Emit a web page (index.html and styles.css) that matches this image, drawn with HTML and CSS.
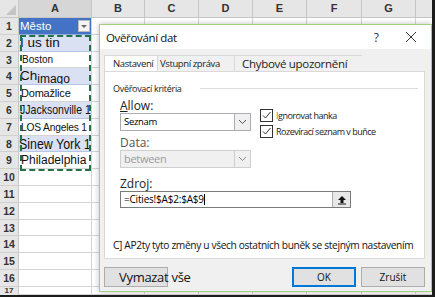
FILE: index.html
```html
<!DOCTYPE html>
<html lang="cs">

<head>
  <meta charset="UTF-8">
  <meta name="viewport" content="width=device-width, initial-scale=1.0">
  <title>Ověřování dat</title>
  <link rel="stylesheet" href="styles.css">
</head>

<body>
  <div class="frame">
    <div class="sheet">
      <div class="corner"><span class="tri"></span></div>
      <div class="colhead sel">A</div>
      <div class="colhead">B</div>
      <div class="colhead">C</div>
      <div class="colhead">D</div>
      <div class="colhead">E</div>
      <div class="colhead">F</div>
      <div class="colhead">G</div>
      <div class="colhead"></div>

      <div class="rowhead">1</div>
      <div class="cell head">Město<span class="filter"></span></div>
      <div class="cell"></div><div class="cell"></div><div class="cell"></div><div class="cell"></div><div class="cell"></div><div class="cell"></div><div class="cell"></div>

      <div class="rowhead">2</div>
      <div class="cell band big">I us tin</div>
      <div class="cell"></div><div class="cell"></div><div class="cell"></div><div class="cell"></div><div class="cell"></div><div class="cell"></div><div class="cell"></div>

      <div class="rowhead">3</div>
      <div class="cell small">Boston</div>
      <div class="cell"></div><div class="cell"></div><div class="cell"></div><div class="cell"></div><div class="cell"></div><div class="cell"></div><div class="cell"></div>

      <div class="rowhead">4</div>
      <div class="cell band big">Ch<span class="sub">imago</span></div>
      <div class="cell"></div><div class="cell"></div><div class="cell"></div><div class="cell"></div><div class="cell"></div><div class="cell"></div><div class="cell"></div>

      <div class="rowhead">5</div>
      <div class="cell mid">Domažlice</div>
      <div class="cell"></div><div class="cell"></div><div class="cell"></div><div class="cell"></div><div class="cell"></div><div class="cell"></div><div class="cell"></div>

      <div class="rowhead">6</div>
      <div class="cell band big"><span class="fit jax">JJacksonville 1</span></div>
      <div class="cell"></div><div class="cell"></div><div class="cell"></div><div class="cell"></div><div class="cell"></div><div class="cell"></div><div class="cell"></div>

      <div class="rowhead">7</div>
      <div class="cell mid"><span class="fit la">LOS Angeles 1</span></div>
      <div class="cell"></div><div class="cell"></div><div class="cell"></div><div class="cell"></div><div class="cell"></div><div class="cell"></div><div class="cell"></div>

      <div class="rowhead">8</div>
      <div class="cell band huge"><span class="fit ny">Sinew York 1</span></div>
      <div class="cell"></div><div class="cell"></div><div class="cell"></div><div class="cell"></div><div class="cell"></div><div class="cell"></div><div class="cell"></div>

      <div class="rowhead">9</div>
      <div class="cell phil">Philadelphia</div>
      <div class="cell"></div><div class="cell"></div><div class="cell"></div><div class="cell"></div><div class="cell"></div><div class="cell"></div><div class="cell"></div>

      <div class="rowhead">10</div>
      <div class="cell"></div><div class="cell"></div><div class="cell"></div><div class="cell"></div><div class="cell"></div><div class="cell"></div><div class="cell"></div><div class="cell"></div>
      <div class="rowhead">11</div>
      <div class="cell"></div><div class="cell"></div><div class="cell"></div><div class="cell"></div><div class="cell"></div><div class="cell"></div><div class="cell"></div><div class="cell"></div>
      <div class="rowhead">12</div>
      <div class="cell"></div><div class="cell"></div><div class="cell"></div><div class="cell"></div><div class="cell"></div><div class="cell"></div><div class="cell"></div><div class="cell"></div>
      <div class="rowhead">13</div>
      <div class="cell"></div><div class="cell"></div><div class="cell"></div><div class="cell"></div><div class="cell"></div><div class="cell"></div><div class="cell"></div><div class="cell"></div>
      <div class="rowhead">14</div>
      <div class="cell"></div><div class="cell"></div><div class="cell"></div><div class="cell"></div><div class="cell"></div><div class="cell"></div><div class="cell"></div><div class="cell"></div>
      <div class="rowhead">15</div>
      <div class="cell"></div><div class="cell"></div><div class="cell"></div><div class="cell"></div><div class="cell"></div><div class="cell"></div><div class="cell"></div><div class="cell"></div>
      <div class="rowhead">16</div>
      <div class="cell"></div><div class="cell"></div><div class="cell"></div><div class="cell"></div><div class="cell"></div><div class="cell"></div><div class="cell"></div><div class="cell"></div>
      <div class="rowhead last">17</div>
      <div class="cell"></div><div class="cell"></div><div class="cell"></div><div class="cell"></div><div class="cell"></div><div class="cell"></div><div class="cell"></div><div class="cell"></div>
    </div>

    <!-- copy marquee around A2:A9 -->
    <div class="marquee"></div>

    <div class="dialog">
      <div class="titlebar">
        <span class="title">Ověřování dat</span>
        <span class="help">?</span>
        <svg class="close" width="12" height="12" viewBox="0 0 12 12">
          <path d="M1 1 L11 11 M11 1 L1 11" stroke="#333" stroke-width="1" fill="none" />
        </svg>
      </div>
      <div class="body">
        <div class="tabs">
          <div class="tab active">Nastavení</div>
          <div class="tab">Vstupní zpráva</div>
          <div class="tab wide">Chybové upozornění</div>
        </div>
        <div class="panel">
          <div class="group">
            <span>Ověřovací kritéria</span>
            <span class="rule"></span>
          </div>
          <div class="criteria">
            <div class="leftcol">
              <div class="label"><u>A</u>llow:</div>
              <div class="select">
                <span class="value">Seznam</span>
                <span class="drop"><svg width="9" height="6" viewBox="0 0 9 6"><path d="M1 1 L4.5 4.5 L8 1" stroke="#555" fill="none" /></svg></span>
              </div>
              <div class="label data">Data:</div>
              <div class="select disabled">
                <span class="value">between</span>
                <span class="drop"><svg width="9" height="6" viewBox="0 0 9 6"><path d="M1 1 L4.5 4.5 L8 1" stroke="#888" fill="none" /></svg></span>
              </div>
            </div>
            <div class="checks">
              <div class="check">
                <span class="box"><svg width="11" height="11" viewBox="0 0 11 11"><path d="M2 5.5 L4.5 8 L9.5 2" stroke="#333" fill="none" /></svg></span>
                <span><span class="orange">I</span>gnorovat hanka</span>
              </div>
              <div class="check">
                <span class="box"><svg width="11" height="11" viewBox="0 0 11 11"><path d="M2 5.5 L4.5 8 L9.5 2" stroke="#333" fill="none" /></svg></span>
                <span>Rozevírací seznam v buňce</span>
              </div>
            </div>
          </div>
          <div class="label source">Zdroj:</div>
          <div class="input">
            <span class="value">=Cities!$A$2:$A$9<span class="caret"></span></span>
            <span class="pick"><svg width="10" height="10" viewBox="0 0 10 10"><path d="M5 1 L9 5 L6.5 5 L6.5 8 L3.5 8 L3.5 5 L1 5 Z" fill="#111" /><rect x="1" y="8.5" width="8" height="1" fill="#111" /></svg></span>
          </div>
          <div class="apply">C] AP2ty tyto změny u všech ostatních buněk se stejným nastavením</div>
        </div>
        <div class="buttons">
          <button class="btn clear">Vymazat vše</button>
          <span class="spacer"></span>
          <button class="btn ok">OK</button>
          <button class="btn">Zrušit</button>
        </div>
      </div>
    </div>
  </div>
</body>

</html>
```

FILE: styles.css
```css
body {
  margin: 0;
  padding: 0;
  background: #1c1c1c;
  font-family: "Open Sans", "Noto Sans", sans-serif;
}

.frame {
  position: relative;
  width: 432px;
  height: 295px;
  overflow: hidden;
  background: #fff;
}

.sheet {
  display: grid;
  grid-template-columns: 19px 73px 53px 54px 54px 54px 55px 54px 20px;
  grid-template-rows: 18px repeat(16, 16.8px) 8.2px;
  font-family: "Liberation Sans", Arial, sans-serif;
}

.corner {
  background: #e6e6e6;
  border-right: 1px solid #c6c6c6;
  border-bottom: 1px solid #c6c6c6;
  position: relative;
}

.tri {
  position: absolute;
  right: 2px;
  bottom: 2px;
  width: 0;
  height: 0;
  border-left: 10px solid transparent;
  border-bottom: 10px solid #c4c4c4;
}

.colhead {
  background: #e6e6e6;
  border-right: 1px solid #c6c6c6;
  border-bottom: 1px solid #c6c6c6;
  color: #333;
  font-size: 11px;
  font-weight: bold;
  text-align: center;
  line-height: 17px;
}

.colhead.sel {
  background: #d6d6d6;
}

.rowhead {
  background: #e6e6e6;
  border-right: 1px solid #c6c6c6;
  border-bottom: 1px solid #d0d0d0;
  color: #333;
  font-size: 10.5px;
  font-weight: bold;
  text-align: center;
  line-height: 16px;
  overflow: hidden;
}

.rowhead.last {
  font-size: 8px;
  line-height: 8px;
  border-bottom: 0;
}

.cell {
  border-right: 1px solid #d4d4d4;
  border-bottom: 1px solid #d4d4d4;
  color: #111;
  font-size: 11px;
  line-height: 16px;
  white-space: nowrap;
  overflow: hidden;
  padding-left: 1px;
}

.cell.band {
  background: #d9e1f2;
  border-bottom-color: #b4c6e7;
}

.cell.head {
  background: #4472c4;
  color: #fff;
  font-size: 11.5px;
  position: relative;
  border-bottom-color: #8ea9db;
}

.filter {
  position: absolute;
  right: 1px;
  top: 2px;
  width: 12px;
  height: 12px;
  background: #f4f4f4;
  border: 1px solid #bbb;
  box-sizing: border-box;
}

.filter::after {
  content: "";
  position: absolute;
  left: 2px;
  top: 4px;
  border-left: 3px solid transparent;
  border-right: 3px solid transparent;
  border-top: 3px solid #666;
}

.cell.big {
  font-size: 13.5px;
}

.cell.huge {
  font-size: 15.5px;
  line-height: 16px;
  padding-left: 0;
}

.cell.small {
  font-size: 10px;
  padding-left: 3px;
}

.cell.mid {
  font-size: 11px;
  padding-left: 2px;
  letter-spacing: -0.2px;
}

.cell.phil {
  font-size: 12px;
  padding-left: 2px;
}

.fit {
  display: inline-block;
  transform-origin: left center;
}

.fit.jax {
  transform: scaleX(0.78);
}

.fit.la {
  transform: scaleX(0.93);
}

.fit.ny {
  transform: scaleX(0.8);
}

.sub {
  font-size: 12px;
  position: relative;
  top: 3px;
}

.marquee {
  position: absolute;
  left: 20px;
  top: 35px;
  width: 71px;
  height: 136px;
  border: 2px dashed #217346;
  box-sizing: border-box;
}

.dialog {
  position: absolute;
  left: 99px;
  top: 24px;
  width: 333px;
  height: 268px;
  border: 1px solid #9fcf7f;
  box-sizing: border-box;
  background: #f0f0f0;
  box-shadow: 0 0 6px rgba(0, 0, 0, 0.25);
  display: flex;
  flex-direction: column;
}

.titlebar {
  background: #fff;
  height: 24px;
  display: flex;
  align-items: center;
  padding: 0 14px 0 6px;
  flex-shrink: 0;
}

.title {
  font-size: 11.5px;
  color: #111;
  flex: 1;
  letter-spacing: -0.35px;
}

.help {
  font-size: 12px;
  color: #333;
  margin-right: 26px;
}

.body {
  flex: 1;
  display: flex;
  flex-direction: column;
  padding: 6px 6px 6px 4px;
}

.tabs {
  display: flex;
  height: 16px;
  margin-top: 0;
}

.tab {
  font-size: 9.5px;
  color: #222;
  padding: 0 0 0 2px;
  line-height: 15px;
  border: 1px solid #d9d9d9;
  border-bottom: 0;
  border-left: 0;
  letter-spacing: -0.4px;
  width: 74px;
}

.tab.active {
  background: #fff;
  border-left: 1px solid #d9d9d9;
  padding-left: 8px;
  width: 44px;
}

.tab.wide {
  font-size: 11.5px;
  letter-spacing: -0.3px;
  padding-left: 7px;
  border-right: 0;
  width: 120px;
}

.panel {
  background: #fff;
  border: 1px solid #d9d9d9;
  height: 188px;
  padding: 10px 6px 0 8px;
  box-sizing: border-box;
}

.group {
  display: flex;
  align-items: center;
  font-size: 9px;
  color: #222;
  letter-spacing: -0.3px;
}

.rule {
  flex: 1;
  height: 1px;
  background: #dcdcdc;
  margin-left: 18px;
}

.criteria {
  display: flex;
  margin-top: 4px;
  padding-left: 7px;
}

.leftcol {
  width: 131px;
}

.label {
  font-size: 12px;
  color: #222;
  line-height: 14px;
}

.label.data {
  margin-top: 5px;
  color: #555;
}

.select {
  height: 18px;
  border: 1px solid #abadb3;
  box-sizing: border-box;
  display: flex;
  background: #fff;
}

.select .value {
  flex: 1;
  font-size: 9.5px;
  line-height: 16px;
  padding-left: 3px;
  letter-spacing: -0.3px;
}

.select .drop {
  width: 15px;
  border-left: 1px solid #abadb3;
  background: #f0f0f0;
  display: flex;
  align-items: center;
  justify-content: center;
}

.select.disabled {
  background: #f0f0f0;
  border-color: #cfcfcf;
}

.select.disabled .value {
  font-size: 11px;
  color: #9a9a9a;
}

.select.disabled .drop {
  border-left-color: #cfcfcf;
}

.checks {
  padding-left: 9px;
  padding-top: 10px;
  display: flex;
  flex-direction: column;
  gap: 3px;
}

.check {
  display: flex;
  align-items: center;
  gap: 3px;
  font-size: 9px;
  letter-spacing: -0.5px;
  color: #222;
}

.box {
  width: 11px;
  height: 11px;
  border: 1px solid #333;
  display: flex;
  background: #fff;
}

.orange {
  color: #b5651d;
}

.label.source {
  margin-top: 9px;
  padding-left: 7px;
}

.input {
  margin-left: 7px;
  width: 231px;
  height: 17px;
  border: 1px solid #7a7a7a;
  box-sizing: border-box;
  display: flex;
}

.input .value {
  flex: 1;
  font-size: 10px;
  line-height: 15px;
  padding-left: 3px;
  letter-spacing: -0.2px;
}

.caret {
  display: inline-block;
  width: 1px;
  height: 11px;
  background: #000;
  vertical-align: -2px;
}

.input .pick {
  width: 17px;
  border-left: 1px solid #adadad;
  background: #e8e8e8;
  display: flex;
  align-items: center;
  justify-content: center;
}

.apply {
  font-size: 10.2px;
  color: #111;
  margin-top: 30px;
  letter-spacing: -0.35px;
  white-space: nowrap;
}

.buttons {
  display: flex;
  margin-top: 8px;
  padding-left: 0;
}

.spacer {
  flex: 1;
}

.btn {
  height: 20px;
  width: 64px;
  background: #e1e1e1;
  border: 1px solid #adadad;
  font-family: "Open Sans", "Noto Sans", sans-serif;
  font-size: 10px;
  color: #111;
  padding: 0;
  margin-left: 5px;
}

.btn.ok {
  border: 2px solid #0078d7;
}

.btn.clear {
  margin-left: 0;
  font-size: 13px;
  text-align: left;
  padding-left: 14px;
  overflow: visible;
  white-space: nowrap;
  letter-spacing: -0.3px;
}
```
